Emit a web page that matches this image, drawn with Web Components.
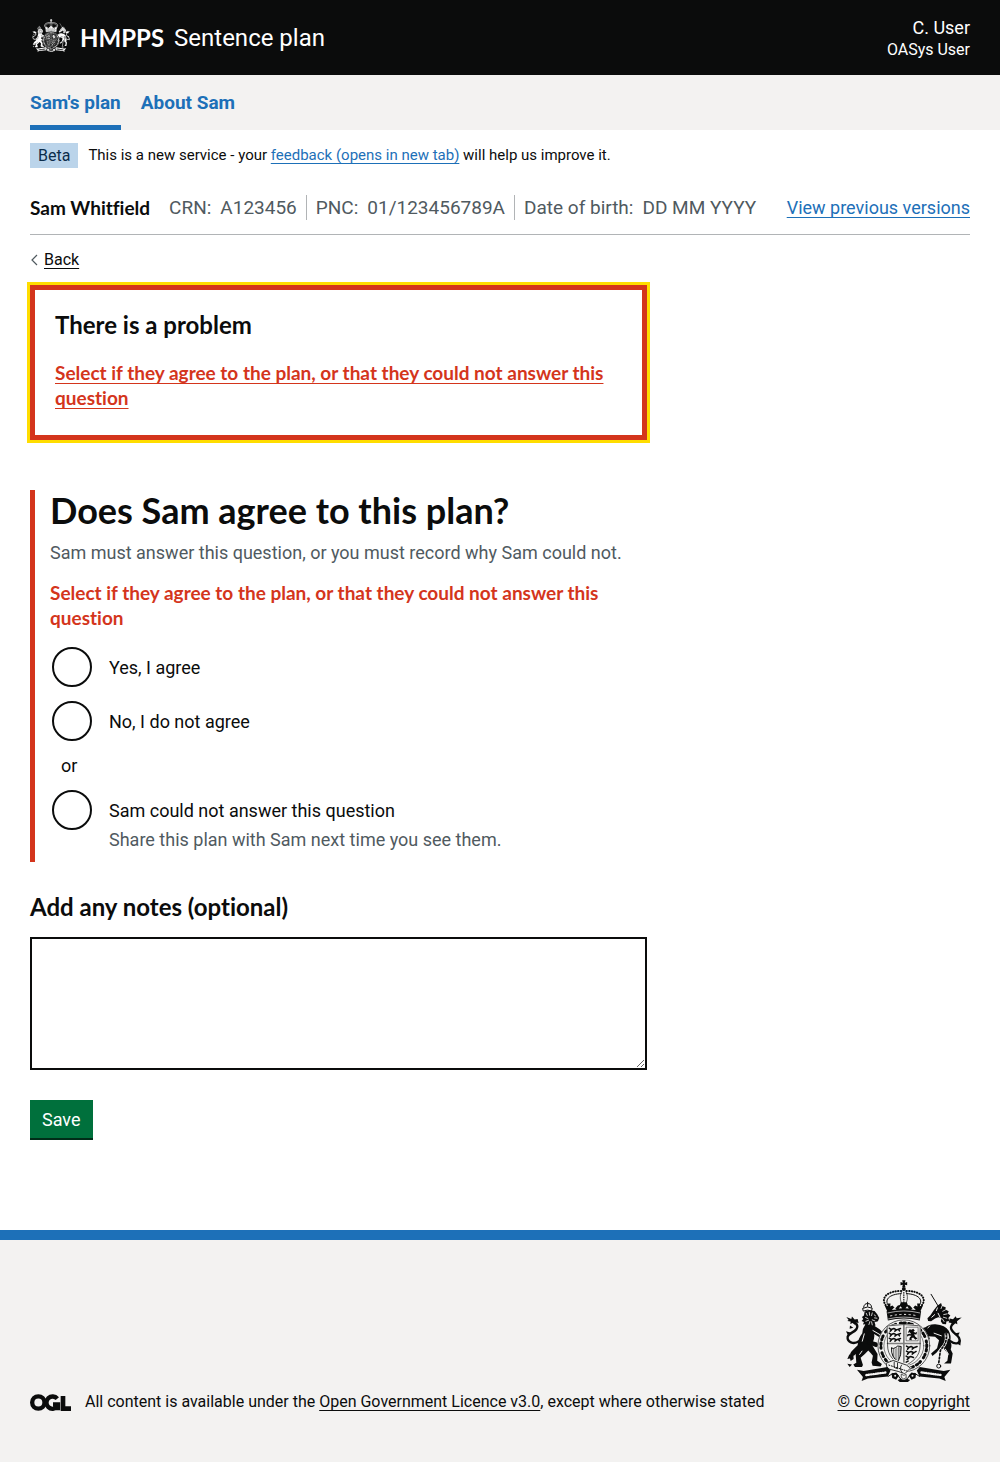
<!DOCTYPE html>
<html lang="en">
<head>
<meta charset="utf-8">
<meta name="viewport" content="width=device-width, initial-scale=1">
<title>Does Sam agree to this plan? - Sentence plan</title>
<style>
  :root {
    --ink: #0b0c0c;
    --muted: #505a5f;
    --blue: #1d70b8;
    --red: #d4351c;
    --panel: #f3f2f1;
    --rule: #b1b4b6;
    --gutter: 30px;
    --strong-font: Lato, "Liberation Sans", sans-serif;
  }
  html { background: var(--panel); }
  body {
    margin: 0;
    background: #fff;
    color: var(--ink);
    font: 18px/25px Roboto, "Liberation Sans", sans-serif;
    font-variant-ligatures: none;
  }
  plan-wrap { padding: 0 var(--gutter); }
</style>
</head>
<body>
<hmpps-header service="Sentence plan">
  <span slot="name">C. User</span>
  <span slot="role">OASys User</span>
</hmpps-header>
<plan-nav></plan-nav>
<plan-wrap>
  <phase-banner phase="Beta">This is a new service - your</phase-banner>
  <identity-bar></identity-bar>
  <back-link></back-link>
  <two-thirds>
    <error-summary heading="There is a problem">Select if they agree to the plan, or that they could not answer this question</error-summary>
    <agreement-question>
      <span slot="title">Does Sam agree to this plan?</span>
      <span slot="hint">Sam must answer this question, or you must record why Sam could not.</span>
      <span slot="error">Select if they agree to the plan, or that they could not answer this question</span>
    </agreement-question>
    <notes-field>Add any notes (optional)</notes-field>
    <save-button>Save</save-button>
  </two-thirds>
</plan-wrap>
<page-footer></page-footer>

<script>
const base = `
  *, *::before, *::after { box-sizing: border-box; }
  :host { display: block; }
  h1, h2, p, ul, dl, dd { margin: 0; padding: 0; }
  ul { list-style: none; }
  a { color: var(--blue); text-decoration: underline; text-decoration-thickness: 1px; text-underline-offset: 3px; text-decoration-skip-ink: none; }
  .strong { font-size: 19px; }
  b, h1, h2, .strong { font-family: var(--strong-font); font-weight: 700; }
`;
function define(name, render) {
  customElements.define(name, class extends HTMLElement {
    constructor() {
      super();
      this.attachShadow({ mode: "open" });
    }
    connectedCallback() {
      const t = document.createElement("template");
      const { css, html } = render(this);
      t.innerHTML = `<style>${base}${css}</style>${html}`;
      this.shadowRoot.replaceChildren(t.content.cloneNode(true));
    }
  });
}

define("royal-crest", () => ({
  css: `
    :host { display: block; width: 117px; color: var(--ink); --hole: var(--panel); }
    svg { display: block; width: 100%; height: auto; }
    .k { fill: currentColor; }
    .h { fill: var(--hole); }
    .s { fill: none; stroke: currentColor; stroke-linecap: round; stroke-linejoin: round; }
    .w { fill: none; stroke: var(--hole); stroke-linecap: round; }
  `,
  html: `<svg viewBox="20 28 352 308" aria-hidden="true">
    <!-- crown: cross, orb, arches, band -->
    <path class="k" d="M192 29h10l-2 7 7-2v10l-7-2 2 8h-10l2-8-7 2v-10l7 2z"/>
    <circle class="k" cx="197" cy="55" r="6"/>
    <path class="s" stroke-width="6" stroke-dasharray="1 7" d="M148 110C120 82 150 60 190 61M246 110C274 82 244 60 204 61"/>
    <path class="s" stroke-width="3" d="M155 110C132 88 155 70 189 69M239 110C262 88 239 70 205 69"/>
    <path class="s" stroke-width="2" d="M190 64C184 76 186 88 190 98M204 64C210 76 208 88 204 98"/>
    <path class="s" stroke-width="4" stroke-dasharray="1 6" d="M197 66V98"/>
    <path class="k" d="M148 124l-9-20 10 4-1-9 9 0-1 9 7-3 8 9 8-9 6-2 3-8h18l3 8 6 2 8 9 8-9 7 3-1-9 9 0-1 9 10-4-9 20z"/>
    <path class="k" d="M145 122q52-14 104 0l-4 28q-48-13-96 0z"/>
    <path class="w" stroke-width="2" d="M149 127q48-12 96 0M151 145q46-11 92 0"/>
    <path class="w" stroke-width="3" stroke-dasharray="4 10" stroke-linecap="butt" d="M157 136q40-9 82 0"/>
    <path class="h" d="M161 118l7-7 7 6zM219 117l7-6 7 7zM182 114l5-7 5 6zM202 113l5-6 5 7z"/>

    <!-- lion supporter -->
    <path class="s" stroke-width="7" d="M62 212C45 224 26 214 28 199C31 184 58 186 57 167C56 155 48 156 41 152"/>
    <path class="k" d="M24 139l15 6 2-7 8 9 9-2 3 12-8-1-1 9-9-8-7 3 1-7-10-2 4-3zM36 186l-13-4 6 12zM45 172l-10-7-1 10z"/>
    <path class="k" d="M82 160q-10 14-10 28q-14 18-14 36q-10 10-18 18q-6 6-4 12l11 2 5-5 2 26-9 5 5 8h21l3-6-7-22q14-12 23-22q8 8 14 16l-4 20 3 10 24 2 4-7-14-10 1-20-18-30q10-14 8-32l22 6 6-7-12-12-16-10q-6-14-24-8z"/>
    <path class="k" d="M106 174l24 12 20 14-2 9-12-1-26-16-10-8zM88 208l28 8 6 8-8 6-28-10z"/>
    <path class="k" d="M45 250l-12 2-6 14 8-2 2 8 9-6zM41 282l-14-2 7 10z"/>
    <path class="k" d="M79 123l12-4 18 2 8 10 6 11-4 10-10 3 3 10-8 4-4-6-5 9-6-7-7 5-1-9-7 1 3-8-7-3 5-6-4-6 6-4z"/>
    <path class="w" stroke-width="2.5" d="M84 128l3 7M93 125l1 9M102 127l-2 8M82 141l7 3M83 152l8-3M92 162l3-9M102 163l-2-9M110 151l-8-3M116 143l-7-1M108 133l4 3"/>
    <path class="w" stroke-width="3" d="M78 190l-6 22M64 252l7-10M104 180l24 14"/>
    <path class="s" stroke-width="3" d="M74 113q14-8 28 0l-2 8q-12-5-24 0zM76 110q2-12 12-11q11-1 12 11M88 95v12"/>

    <!-- unicorn supporter -->
    <path class="s" stroke-width="3" d="M279 71L300 106"/>
    <path class="s" stroke-width="7" d="M337 212C356 226 369 216 363 202C356 189 336 184 339 169C341 158 350 160 353 150"/>
    <path class="k" d="M371 141l-15 2-3-6-8 9-10-2-3 12 8 1 2 8 8-8 8 4-1-9zM369 207l-2 18-9-5zM347 189l18-3-6 12z"/>
    <path class="k" d="M297 106l12-9 3 9 11 4-1 7 10 5-3 7 8 6-6 7 3 9-9 2-1 8-10-1-6-8 3-10-10-2-10 4-12 8-9-1-2-8 9-9 10-15z"/>
    <path class="w" stroke-width="3" d="M298 112l-3 8M290 132l-9 8M300 128l6 12M306 152l-6 8"/>
    <path class="k" d="M262 170q12-10 30-9q30 2 40 20q8 14 5 32q6 10 1 24l6 12-5 30h-21l10-8 3-20-12-14-6-12-18 22-12 10-4-8 18-16 6-24-12-10-20-2-18-12-16 2-6-8z"/>
    <path class="w" stroke-width="2.5" d="M312 106l-3 8M322 118l-8 4M327 130l-10 2M326 143l-10-3M318 153l-5-8M275 166l-6 7"/>
    <path class="w" stroke-width="3" d="M322 236l9 15M288 188l22 8M330 190l2 14"/>
    <path class="s" stroke-width="4" d="M279 171l-15 8-12 14 9 5M283 182l-14 11 4 12"/>
    <path class="w" stroke-width="9" d="M324 191C328 215 319 224 307 240L302 278"/>
    <path class="s" stroke-width="5" stroke-dasharray="5 6" d="M324 188C328 213 319 224 307 240L302 278"/>
    <circle class="s" stroke-width="3" cx="302" cy="287" r="6"/>

    <!-- garter and shield -->
    <ellipse class="h" cx="197" cy="226" rx="79" ry="79"/>
    <ellipse class="s" stroke-width="2" cx="197" cy="226" rx="78" ry="78"/>
    <ellipse class="s" stroke-width="9" stroke-dasharray="3 8 5 10 3 6 3 14" stroke-linecap="butt" cx="197" cy="226" rx="69" ry="69"/>
    <ellipse class="s" stroke-width="1.5" cx="197" cy="226" rx="60" ry="60"/>
    <path class="h" d="M146 165q51-9 102 0v60c0 35-22 52-51 66c-29-14-51-31-51-66z"/>
    <path class="s" stroke-width="2" d="M148 166q49-8 98 0v58c0 34-21 50-49 64c-28-14-49-30-49-64z"/>
    <path class="s" stroke-width="5" opacity=".5" d="M197 164V286M148 219H246"/>
    <!-- lions passant in the first and fourth quarters -->
    <g class="s" stroke-width="4.5">
      <path d="M153 173l6 4 8-3 8 4 12-4M156 182l4-4M170 182l4-3M184 181l-3-4M153 188l6 4 8-3 8 4 12-4M156 197l4-4M170 197l4-3M184 196l-3-4M153 203l6 4 8-3 8 4 12-4M156 212l4-4M170 212l4-3M184 211l-3-4"/>
      <path d="M205 227l6 4 8-3 8 4 10-4M208 236l4-4M222 236l4-3M205 242l6 4 8-3 8 4 7-4M208 251l4-4M222 251l4-3M204 257l6 4 8-3 8 3M207 267l5-4M204 275l6-3"/>
    </g>
    <!-- rampant lion -->
    <path class="s" stroke-width="3" opacity=".5" d="M205 170h35v41h-35z"/>
    <path class="k" d="M214 176l7 2 4-3 5 5-4 4 6 3 5-3-2 8-7-1 3 7 7 6-6 4-7-7-5 2 1 6-8-1 2-7 5-5-8-1-4 4-2-6 7-3 6 1-4-6-6 2z"/>
    <!-- harp -->
    <path class="s" stroke-width="3" d="M160 233q-2 28 20 40q10-18 9-45q-13-4-16 3q-6 5-13 2z"/>
    <path class="s" stroke-width="1.5" d="M166 236v22M171 236v29M176 233v34M181 231v35M185 230v26"/>

    <!-- garter buckle and strap -->
    <path class="h" d="M143 276l24-10 38 14 16 12-21 22-20-10-34-10z"/>
    <path class="s" stroke-width="2.5" d="M145 278l20-8 40 14 12 9-17 17-20-7-32-8zM178 278v17l-10-4v-16M190 284q-8 12 2 22"/>
    <path class="s" stroke-width="3" stroke-dasharray="3 5" d="M152 284l55 18"/>

    <!-- motto scroll -->
    <path class="k" d="M56 298l20 4 72-12 9 10-8 18-60 6-19 8 4-12zM337 298l-20 4-72-12-9 10 8 18 60 6 19 8-4-12z"/>
    <path class="w" stroke-width="7" stroke-linecap="butt" stroke-dasharray="2 5" d="M84 314l60-8M250 306l60 8"/>
    <path class="s" stroke-width="3" d="M150 318l14-9 14 3 8 13 11-7 11 7 8-13 14-3 14 9"/>
    <path class="k" d="M160 309l14-3 8 10-8 12-12-5zM234 309l-14-3-8 10 8 12 12-5zM178 329q19-9 38 0l-8 7h-22z"/>
    <circle class="h" cx="171" cy="316" r="3"/><circle class="h" cx="223" cy="316" r="3"/>
    <circle class="h" cx="197" cy="319" r="9"/>
    <path class="s" stroke-width="2" d="M190 312q7 6 14 0v10q-7 8-14 0z"/>
  </svg>`
}));

define("hmpps-header", el => ({
  css: `
    :host { background: var(--ink); color: #fff; }
    header { display: flex; align-items: center; justify-content: space-between; min-height: 75px; padding: 0 var(--gutter); }
    .brand { display: flex; align-items: center; gap: 10px; font-size: 24px; line-height: 30px; color: #fff; text-decoration: none; }
    royal-crest { width: 38px; margin: 0 0 4px 2px; color: #fff; --hole: var(--ink); }
    .user { text-align: right; }
    .role { font-size: 16px; line-height: 20px; }
  `,
  html: `<header>
    <a class="brand" href="#"><royal-crest></royal-crest><b>HMPPS</b><span>${el.getAttribute("service")}</span></a>
    <div class="user"><div><slot name="name"></slot></div><div class="role"><slot name="role"></slot></div></div>
  </header>`
}));

define("plan-nav", () => ({
  css: `
    :host { background: var(--panel); }
    ul { display: flex; gap: 20px; padding: 0 var(--gutter); }
    a { display: block; padding: 15px 0; border-bottom: 0 solid var(--blue); font-size: 19px; font-weight: 700; text-decoration: none; }
    a[aria-current] { padding-bottom: 10px; border-width: 5px; }
  `,
  html: `<nav aria-label="Primary"><ul><li><a href="#" aria-current="page">Sam's plan</a></li><li><a href="#">About Sam</a></li></ul></nav>`
}));

define("plan-wrap", () => ({ css: ``, html: `<main><slot></slot></main>` }));
define("two-thirds", () => ({
  css: `:host { max-width: calc((100% + 30px) * 2 / 3 - 30px); }`,
  html: `<slot></slot>`
}));

define("phase-banner", el => ({
  css: `
    p { display: flex; align-items: center; gap: 10px; padding: 13px 0 12px; font-size: 15px; }
    strong { padding: 0 8px; background: #bbd4ea; color: #0c2d4a; font-size: 16px; font-weight: 400; }
  `,
  html: `<p><strong>${el.getAttribute("phase")}</strong><span><slot></slot> <a href="#">feedback (opens in new tab)</a> will help us improve it.</span></p>`
}));

define("identity-bar", () => ({
  css: `
    section { display: flex; justify-content: space-between; padding: 15px 0 14px; border-bottom: 1px solid var(--rule); }
    dl { display: flex; color: var(--muted); font-size: 19px; }
    .name { margin-right: 19px; color: var(--ink); }
    .pair { display: flex; gap: 9px; }
    .pair + .pair { margin-left: 9px; padding-left: 9px; border-left: 1px solid var(--rule); }
  `,
  html: `<section aria-label="Person">
    <dl>
      <div class="name strong">Sam Whitfield</div>
      <div class="pair"><dt>CRN:</dt><dd>A123456</dd></div>
      <div class="pair"><dt>PNC:</dt><dd>01/123456789A</dd></div>
      <div class="pair"><dt>Date of birth:</dt><dd>DD MM YYYY</dd></div>
    </dl>
    <a href="#">View previous versions</a>
  </section>`
}));

define("back-link", () => ({
  css: `
    :host { padding: 15px 0; }
    a { display: flex; align-items: center; gap: 5px; width: fit-content; color: var(--ink); font-size: 16px; line-height: 20px; text-decoration: none; }
    span { text-decoration: underline; text-decoration-thickness: 1px; text-underline-offset: 3px; text-decoration-skip-ink: none; }
    svg { display: block; }
  `,
  html: `<a href="#"><svg width="9" height="12" viewBox="0 0 9 12" aria-hidden="true"><path d="M7 1L2 6l5 5" fill="none" stroke="#505a5f" stroke-width="1.2"/></svg><span>Back</span></a>`
}));

define("error-summary", el => ({
  css: `
    :host { margin-bottom: 50px; }
    div { padding: 20px 20px 25px; border: 5px solid var(--red); outline: 3px solid #fd0; }
    h2 { margin-bottom: 20px; font-size: 24px; line-height: 30px; }
    a { color: var(--red); }
  `,
  html: `<div role="alert"><h2>${el.getAttribute("heading")}</h2><p class="strong"><a href="#agree"><slot></slot></a></p></div>`
}));

define("agreement-question", () => ({
  css: `
    fieldset { min-width: 0; margin: 0 0 30px; padding: 0 0 10px 15px; border: 0; border-left: 5px solid var(--red); }
    legend { padding: 0; float: left; width: 100%; margin-bottom: 10px; }
    h1 { font-size: 36px; line-height: 40px; }
    .hint { clear: both; color: var(--muted); }
    .error { margin: 15px 0; color: var(--red); }
    .item { display: grid; grid-template-columns: 44px 1fr; column-gap: 15px; align-items: center; }
    .item + .item, .or, .or + .item { margin-top: 10px; }
    .or { padding-left: 11px; }
    input { appearance: none; width: 40px; height: 40px; margin: 2px; border: 2px solid var(--ink); border-radius: 50%; background: #fff; }
    input:checked { background: radial-gradient(var(--ink) 10px, #fff 11px); }
    .item .hint { grid-column: 2; margin-top: -5px; }
  `,
  html: `<fieldset>
    <legend><h1><slot name="title"></slot></h1></legend>
    <p class="hint"><slot name="hint"></slot></p>
    <p class="error strong"><slot name="error"></slot></p>
    <div class="item"><input type="radio" name="agree" id="agree"><label for="agree">Yes, I agree</label></div>
    <div class="item"><input type="radio" name="agree" id="disagree"><label for="disagree">No, I do not agree</label></div>
    <div class="or">or</div>
    <div class="item"><input type="radio" name="agree" id="unable" aria-describedby="unable-hint"><label for="unable">Sam could not answer this question</label><div class="hint" id="unable-hint">Share this plan with Sam next time you see them.</div></div>
  </fieldset>`
}));

define("notes-field", () => ({
  css: `
    :host { margin-bottom: 30px; }
    label { display: block; margin-bottom: 15px; line-height: 30px; }
    label.strong { font-size: 24px; }
    textarea { display: block; width: 100%; min-height: 133px; padding: 5px; border: 2px solid var(--ink); border-radius: 0; background: #fff; color: inherit; font: inherit; resize: vertical; }
  `,
  html: `<label class="strong" for="notes"><slot></slot></label><textarea id="notes" name="notes"></textarea>`
}));

define("save-button", () => ({
  css: `
    :host { padding-bottom: 92px; }
    button { display: block; padding: 7px 12px 6px; border: 0; background: #00703c; box-shadow: 0 2px 0 #002d18; color: #fff; font: inherit; }
  `,
  html: `<button type="submit"><slot></slot></button>`
}));

define("page-footer", () => ({
  css: `
    :host { background: var(--panel); border-top: 10px solid var(--blue); font-size: 16px; line-height: 20px; }
    footer { display: flex; align-items: flex-end; justify-content: space-between; padding: 40px var(--gutter) 50px; }
    .licence { display: flex; align-items: center; gap: 14px; }
    svg { display: block; }
    a { color: var(--ink); }
    .crown { display: flex; flex-direction: column; align-items: center; gap: 10px; }
  `,
  html: `<footer>
    <div class="licence">
      <svg width="41" height="17" viewBox="0 0 123 51" role="img" aria-label="Open Government Licence" fill="none" stroke="#0b0c0c" stroke-width="13">
        <circle cx="25" cy="25.5" r="18.5"/>
        <path d="M82 14A18.5 18.5 0 1 0 82 38M84 49V31H69"/>
        <path d="M99 6V44H123" stroke-width="14"/>
      </svg>
      <span>All content is available under the <a href="#">Open Government Licence v3.0</a>, except where otherwise stated</span>
    </div>
    <div class="crown"><royal-crest></royal-crest><a href="#">© Crown copyright</a></div>
  </footer>`
}));
</script>
</body>
</html>
